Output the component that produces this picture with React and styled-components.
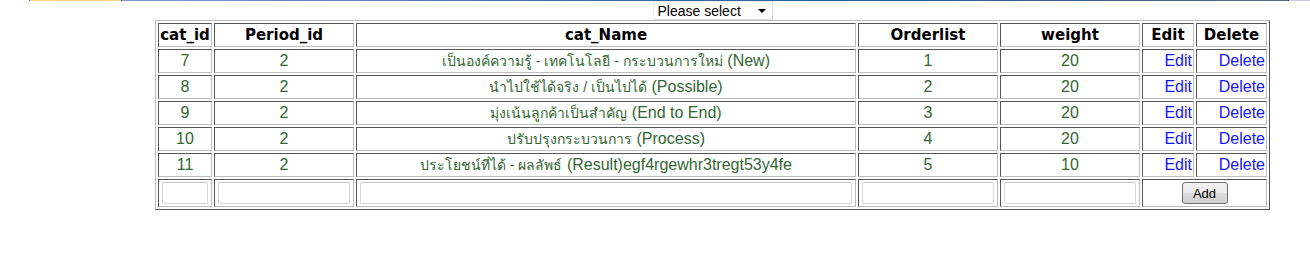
import styled, { createGlobalStyle } from 'styled-components';

const GlobalStyle = createGlobalStyle`
  body {
    margin: 0;
    background: #fff;
    font-family: 'Liberation Sans', Arial, sans-serif;
  }
`;

// th = thai label, en = english tag that follows it
const rows = [
  { id: 7, period: 2, th: 'เป็นองค์ความรู้ - เทคโนโลยี - กระบวนการใหม่', en: '(New)', order: 1, weight: 20 },
  { id: 8, period: 2, th: 'นำไปใช้ได้จริง / เป็นไปได้', en: '(Possible)', order: 2, weight: 20 },
  { id: 9, period: 2, th: 'มุ่งเน้นลูกค้าเป็นสำคัญ', en: '(End to End)', order: 3, weight: 20 },
  { id: 10, period: 2, th: 'ปรับปรุงกระบวนการ', en: '(Process)', order: 4, weight: 20 },
  { id: 11, period: 2, th: 'ประโยชน์ที่ได้ - ผลลัพธ์', en: '(Result)egf4rgewhr3tregt53y4fe', order: 5, weight: 10 },
];

const columns = [
  { label: 'cat_id', w: 54 },
  { label: 'Period_id', w: 140 },
  { label: 'cat_Name', w: 500 },
  { label: 'Orderlist', w: 140 },
  { label: 'weight', w: 140 },
  { label: 'Edit', w: 52 },
  { label: 'Delete', w: 71 },
];

const App = () => {
  return (
    <>
      <GlobalStyle />
      <TopStrip>
        <StripGap />
        <StripTab />
        <StripBar />
        <StripEnd />
      </TopStrip>

      <Wrapper>
        <SelectRow>
          <PeriodSelect>
            <span>Please select</span>
            <Caret />
          </PeriodSelect>
        </SelectRow>

        <Grid>
          <thead>
            <tr>
              {columns.map((c) => (
                <HeadCell key={c.label} $w={c.w}>
                  {c.label}
                </HeadCell>
              ))}
            </tr>
          </thead>
          <tbody>
            {rows.map((r) => (
              <tr key={r.id}>
                <Cell>{r.id}</Cell>
                <Cell>{r.period}</Cell>
                <Cell>
                  <ThaiText>{r.th}</ThaiText> {r.en}
                </Cell>
                <Cell>{r.order}</Cell>
                <Cell>{r.weight}</Cell>
                <LinkCell>
                  <ActionLink href='#'>Edit</ActionLink>
                </LinkCell>
                <LinkCell>
                  <ActionLink href='#'>Delete</ActionLink>
                </LinkCell>
              </tr>
            ))}
            <tr>
              <InputCell>
                <TextInput />
              </InputCell>
              <InputCell>
                <TextInput />
              </InputCell>
              <InputCell>
                <TextInput />
              </InputCell>
              <InputCell>
                <TextInput />
              </InputCell>
              <InputCell>
                <TextInput />
              </InputCell>
              <InputCell colSpan={2}>
                <AddButton type='button'>Add</AddButton>
              </InputCell>
            </tr>
          </tbody>
        </Grid>
      </Wrapper>
    </>
  );
};

export default App;

const TopStrip = styled.div`
  display: flex;
  height: 1px;
`;

const StripGap = styled.div`
  width: 29px;
`;

const StripTab = styled.div`
  width: 93px;
  background: #fbd48e;
  border-left: 1px solid #6b5a3a;
  border-right: 1px solid #4a5a70;
  box-sizing: border-box;
`;

const StripBar = styled.div`
  width: 1166px;
  background: linear-gradient(to right, #7d9ccb, #3c6aa4 40%, #2f5f93 70%, #50687c);
`;

const StripEnd = styled.div`
  flex: 1;
  background: #c9ced6;
  border-left: 1px solid #1e2a38;
`;

const Wrapper = styled.div`
  margin-left: 155px;
  width: 1115px;
`;

const SelectRow = styled.div`
  display: flex;
  justify-content: center;
`;

const PeriodSelect = styled.div`
  box-sizing: border-box;
  width: 120px;
  height: 19px;
  display: flex;
  align-items: center;
  justify-content: space-between;
  padding: 0 5px 0 4px;
  background: #fff;
  border: 1px solid #f0f0f0;
  border-right-color: #dcdcdc;
  border-bottom-color: #dcdcdc;
  font-size: 14px;
  color: #000;
`;

const Caret = styled.span`
  width: 0;
  height: 0;
  margin-right: 1px;
  border-left: 4px solid transparent;
  border-right: 4px solid transparent;
  border-top: 4px solid #000;
`;

const Grid = styled.table`
  width: 1115px;
  table-layout: fixed;
  border-collapse: separate;
  border-spacing: 2px;
  border: 1px solid;
  border-color: #bdbdbd #555 #555 #bdbdbd;
  color: #336633;
  font-size: 16px;
  line-height: 18px;
`;

const cellBorder = `
  box-sizing: border-box;
  border: 1px solid;
  border-color: #555 #bdbdbd #bdbdbd #555;
  padding: 0 1px;
`;

const HeadCell = styled.th`
  ${cellBorder}
  width: ${(p) => p.$w}px;
  height: 24px;
  font-family: 'DejaVu Sans', Tahoma, sans-serif;
  font-size: 15px;
  font-weight: bold;
  color: #000;
  text-align: center;
  white-space: nowrap;
  overflow: hidden;
`;

const Cell = styled.td`
  ${cellBorder}
  height: 24px;
  max-height: 24px;
  text-align: center;
  white-space: nowrap;
  overflow: hidden;
`;

const ThaiText = styled.span`
  font-size: 14px;
  line-height: 16px;
`;

const LinkCell = styled(Cell)`
  text-align: right;
`;

const ActionLink = styled.a`
  color: #1414ff;
  text-decoration: none;
`;

const InputCell = styled.td`
  ${cellBorder}
  height: 28px;
  padding: 2px 3px;
  text-align: center;
`;

const TextInput = styled.input`
  box-sizing: border-box;
  display: block;
  width: 100%;
  height: 22px;
  border: 1px solid #d6d6d6;
  border-top-color: #c4c4c4;
  border-radius: 2px;
  background: #fff;
`;

const AddButton = styled.button`
  box-sizing: border-box;
  width: 46px;
  height: 22px;
  padding: 0;
  font-family: 'Liberation Sans', Arial, sans-serif;
  font-size: 13px;
  color: #000;
  border: 1px solid #707070;
  border-radius: 3px;
  background: linear-gradient(#f2f2f2, #ebebeb 50%, #dddddd 50%, #cfcfcf);
`;
